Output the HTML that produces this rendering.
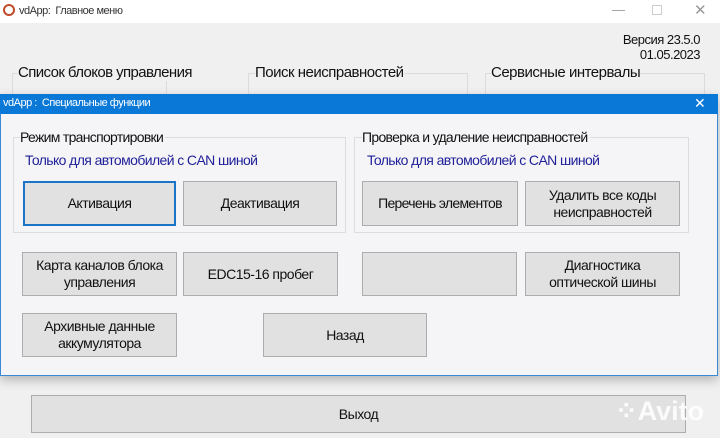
<!DOCTYPE html>
<html><head><meta charset="utf-8"><style>
*{margin:0;padding:0;box-sizing:border-box}
body{width:720px;height:438px;overflow:hidden;background:#f0f0f0;position:relative;font-family:"Liberation Sans",sans-serif;color:#111;font-size:14px;letter-spacing:-0.5px}
.a{position:absolute}
.btn{position:absolute;background:#e1e1e1;border:1px solid #adadad;display:flex;align-items:center;justify-content:center;text-align:center;line-height:17px;font-size:14px}
.grp{position:absolute;border:1px solid #dcdcdc}
</style></head><body>
<div class="a" style="left:0;top:0;width:720px;height:23px;background:#fff"></div>
<div class="a" style="left:3px;top:4px;width:12px;height:12px;border:2px solid #c04a2a;border-radius:50%"></div>
<div class="a" style="left:19px;top:5px;font-size:11px;color:#333">vdApp:&nbsp; Главное меню</div>
<div class="a" style="left:612px;top:2px;font-size:13px;color:#999">—</div>
<div class="a" style="left:652px;top:5px;width:10px;height:10px;border:1px solid #ccc"></div>
<div class="a" style="left:694px;top:1px;font-size:15px;color:#999">✕</div>
<div class="a" style="left:600px;top:32px;width:100px;text-align:right;font-size:13px;line-height:15px">Версия 23.5.0<br>01.05.2023</div>
<div class="grp" style="left:12px;top:73px;width:155px;height:30px"></div>
<div class="grp" style="left:248px;top:73px;width:220px;height:30px"></div>
<div class="grp" style="left:485px;top:73px;width:220px;height:30px"></div>
<div class="a" style="left:18px;top:64px;font-size:15px;background:#f0f0f0;letter-spacing:-0.6px">Список блоков управления</div>
<div class="a" style="left:255px;top:64px;font-size:15px;background:#f0f0f0">Поиск неисправностей</div>
<div class="a" style="left:491px;top:64px;font-size:15px;background:#f0f0f0">Сервисные интервалы</div>
<div class="a" style="left:0;top:94px;width:718px;height:282px;background:#f5f5f7;border:1px solid #3b8ad6;box-shadow:0 4px 10px rgba(0,0,0,.25)"></div>
<div class="a" style="left:0;top:94px;width:718px;height:20px;background:#0a78d7"></div>
<div class="a" style="left:3px;top:97px;font-size:11px;color:#fff">vdApp :&nbsp; Специальные функции</div>
<div class="a" style="left:694px;top:95px;font-size:14px;color:#fff">✕</div>
<div class="grp" style="left:13px;top:137px;width:333px;height:96px"></div>
<div class="grp" style="left:354px;top:137px;width:335px;height:96px"></div>
<div class="a" style="left:20px;top:129px;background:#f5f5f7;padding-right:2px;letter-spacing:-0.7px">Режим транспортировки</div>
<div class="a" style="left:362px;top:129px;background:#f5f5f7;padding-right:2px;letter-spacing:-0.7px">Проверка и удаление неисправностей</div>
<div class="a" style="left:25px;top:152px;color:#1f1f99;letter-spacing:-0.6px">Только для автомобилей с CAN шиной</div>
<div class="a" style="left:367px;top:152px;color:#1f1f99;letter-spacing:-0.6px">Только для автомобилей с CAN шиной</div>
<div class="btn" style="left:23px;top:181px;width:153px;height:45px;border:2px solid #1c74c8">Активация</div>
<div class="btn" style="left:183px;top:181px;width:154px;height:45px">Деактивация</div>
<div class="btn" style="left:362px;top:181px;width:156px;height:45px;letter-spacing:-0.7px">Перечень элементов</div>
<div class="btn" style="left:525px;top:181px;width:155px;height:45px">Удалить все коды<br>неисправностей</div>
<div class="btn" style="left:22px;top:252px;width:155px;height:44px">Карта каналов блока<br>управления</div>
<div class="btn" style="left:183px;top:252px;width:155px;height:44px">EDC15-16 пробег</div>
<div class="btn" style="left:362px;top:252px;width:155px;height:44px"></div>
<div class="btn" style="left:525px;top:252px;width:155px;height:44px">Диагностика<br>оптической шины</div>
<div class="btn" style="left:22px;top:313px;width:155px;height:44px">Архивные данные<br>аккумулятора</div>
<div class="btn" style="left:263px;top:313px;width:164px;height:44px">Назад</div>
<div class="btn" style="left:31px;top:395px;width:655px;height:38px">Выход</div>
<div class="a" style="left:615px;top:396px;font-size:27px;font-weight:bold;color:rgba(255,255,255,.85);letter-spacing:0">⁘Avito</div>
</body></html>
